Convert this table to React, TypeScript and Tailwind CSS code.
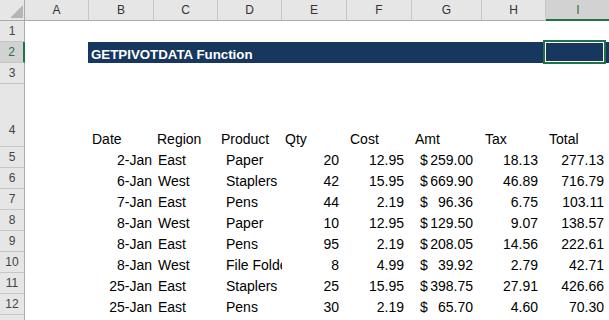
import React from 'react'

// ─── Sheet data ───────────────────────────────────────────────────────────────

const COLS = [
  { key: 'A', w: 'w-[64px]' },
  { key: 'B', w: 'w-[65px]' },
  { key: 'C', w: 'w-[64px]' },
  { key: 'D', w: 'w-[64px]' },
  { key: 'E', w: 'w-[65px]' },
  { key: 'F', w: 'w-[65px]' },
  { key: 'G', w: 'w-[70px]' },
  { key: 'H', w: 'w-[64px]' },
  { key: 'I', w: 'w-[64px]' },
]

const HEADERS = ['Date', 'Region', 'Product', 'Qty', 'Cost', 'Amt', 'Tax', 'Total']

const ROWS: string[][] = [
  ['2-Jan', 'East', 'Paper', '20', '12.95', '259.00', '18.13', '277.13'],
  ['6-Jan', 'West', 'Staplers', '42', '15.95', '669.90', '46.89', '716.79'],
  ['7-Jan', 'East', 'Pens', '44', '2.19', '96.36', '6.75', '103.11'],
  ['8-Jan', 'West', 'Paper', '10', '12.95', '129.50', '9.07', '138.57'],
  ['8-Jan', 'East', 'Pens', '95', '2.19', '208.05', '14.56', '222.61'],
  ['8-Jan', 'West', 'File Folders', '8', '4.99', '39.92', '2.79', '42.71'],
  ['25-Jan', 'East', 'Staplers', '25', '15.95', '398.75', '27.91', '426.66'],
  ['25-Jan', 'East', 'Pens', '30', '2.19', '65.70', '4.60', '70.30'],
]

const FONT = "font-['Liberation_Sans',Arial,sans-serif]"

// ─── Headers ──────────────────────────────────────────────────────────────────

function RowHeader({ n, selected, tall }: { n?: number; selected?: boolean; tall?: boolean }) {
  return (
    <div
      className={[
        'w-[25px] shrink-0 flex items-center justify-center text-[12px] border-b border-[#c6c6c6]',
        tall ? 'h-[63px] pt-[30px]' : 'h-[21px]',
        selected
          ? 'bg-[#d2d2d2] text-[#217346] border-r-2 border-r-[#217346]'
          : 'bg-[#e6e6e6] text-[#444] border-r border-r-[#ababab]',
      ].join(' ')}
    >
      {n}
    </div>
  )
}

function ColumnHeaders() {
  return (
    <div className="flex h-[21px]">
      <div className="w-[25px] h-[21px] shrink-0 bg-[#e6e6e6] border-r border-b border-[#ababab] relative">
        <svg width="25" height="21" className="absolute inset-0">
          <polygon points="10,18 23,5 23,18" fill="#b5b5b5" />
        </svg>
      </div>
      {COLS.map(c =>
        c.key === 'I' ? (
          <div
            key={c.key}
            className={`${c.w} shrink-0 h-[21px] bg-[#d2d2d2] border-b-2 border-[#217346] text-[#217346] text-[12px] flex items-center justify-center pt-[1px]`}
          >
            {c.key}
          </div>
        ) : (
          <div
            key={c.key}
            className={`${c.w} shrink-0 h-[21px] bg-[#e6e6e6] border-r border-r-[#c6c6c6] border-b border-b-[#ababab] text-[#333] text-[12px] flex items-center justify-center`}
          >
            {c.key}
          </div>
        ),
      )}
    </div>
  )
}

// ─── Rows ─────────────────────────────────────────────────────────────────────

function EmptyRow({ n }: { n?: number }) {
  return (
    <div className="flex h-[21px]">
      <RowHeader n={n} />
      <div className="flex-1 bg-white" />
    </div>
  )
}

function TitleRow() {
  return (
    <div className="flex h-[21px]">
      <RowHeader n={2} selected />
      <div className="w-[63px] shrink-0" />
      <div className="w-[65px] shrink-0 h-[21px] bg-[#17375e] relative z-10 flex items-end">
        <span className="pl-[3px] leading-[16px] whitespace-nowrap text-white font-bold text-[13.3px] font-['Liberation_Sans',Arial,sans-serif]">
          GETPIVOTDATA Function
        </span>
      </div>
      <div className="w-[392px] shrink-0 h-[21px] bg-[#17375e]" />
      <div className="w-[64px] shrink-0 h-[21px] bg-[#17375e] relative">
        <div className="absolute -left-[2px] -top-[2px] w-[63px] h-[24px] border-2 border-[#217346]">
          <div className="w-full h-full border border-white" />
        </div>
      </div>
    </div>
  )
}

function HeaderRow() {
  return (
    <div className="flex h-[63px]">
      <RowHeader n={4} tall />
      <div className="w-[64px] shrink-0" />
      {HEADERS.map((h, i) => (
        <div
          key={h}
          className={`${COLS[i + 1].w} shrink-0 flex items-end pl-[3px] leading-[16px] text-[14px] text-black`}
        >
          {h}
        </div>
      ))}
    </div>
  )
}

function DataRow({ n, row }: { n: number; row: string[] }) {
  const [date, region, product, qty, cost, amt, tax, total] = row
  const cell = 'shrink-0 h-[21px] flex items-end leading-[16px] text-[14px] text-black whitespace-nowrap overflow-hidden'
  return (
    <div className="flex h-[21px]">
      <RowHeader n={n} />
      <div className="w-[64px] shrink-0" />
      <div className={`w-[65px] ${cell} justify-end pr-[2px]`}>{date}</div>
      <div className={`w-[64px] ${cell} pl-[4px]`}>{region}</div>
      <div className={`w-[64px] ${cell} pl-[8px]`}>{product}</div>
      <div className={`w-[65px] ${cell} justify-end pr-[8px]`}>{qty}</div>
      <div className={`w-[65px] ${cell} justify-end pr-[8px]`}>{cost}</div>
      <div className={`w-[70px] ${cell} justify-between pl-[8px] pr-[9px]`}>
        <span>$</span>
        <span>{amt}</span>
      </div>
      <div className={`w-[64px] ${cell} justify-end pr-[8px]`}>{tax}</div>
      <div className={`w-[64px] ${cell} justify-end pr-[6px]`}>{total}</div>
    </div>
  )
}

// ─── Sheet ────────────────────────────────────────────────────────────────────

export default function App() {
  return (
    <div className={`w-[609px] h-[320px] overflow-hidden bg-white ${FONT}`}>
      <div className="w-[640px]">
        <ColumnHeaders />
        <EmptyRow n={1} />
        <TitleRow />
        <EmptyRow n={3} />
        <HeaderRow />
        {ROWS.map((r, i) => (
          <DataRow key={i} n={i + 5} row={r} />
        ))}
        {/* row 13 is only a sliver at the bottom edge, its number is off-screen */}
        <EmptyRow />
      </div>
    </div>
  )
}
